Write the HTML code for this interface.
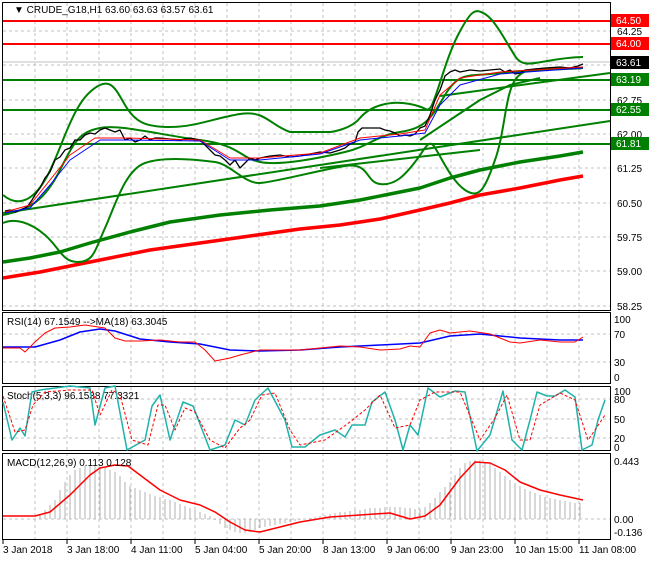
<!DOCTYPE html><html><head><style>
body{margin:0;background:#fff;width:650px;height:560px;overflow:hidden;font-family:"Liberation Sans",sans-serif}
</style></head><body>
<svg width="650" height="560" xmlns="http://www.w3.org/2000/svg" font-family="Liberation Sans, sans-serif" font-size="10" stroke-linejoin="round">
<rect width="650" height="560" fill="#fff"/>
<g stroke="#c0c0c0" stroke-dasharray="3,3" stroke-width="1">
<path d="M35 3V540M67 3V540M99 3V540M131 3V540M163 3V540M195 3V540M227 3V540M259 3V540M291 3V540M323 3V540M355 3V540M387 3V540M419 3V540M451 3V540M483 3V540M515 3V540M547 3V540M579 3V540"/>
<path d="M3 31H610M3 65H610M3 100H610M3 134H610M3 168H610M3 203H610M3 237H610M3 271H610M3 306H610"/>
<path d="M3 334H610M3 362H610M3 399H610M3 419H610M3 438H610M3 519H610"/>
</g>
<line x1="3" y1="62" x2="610" y2="62" stroke="#c0c0c0"/>
<g fill="none" stroke="#000" stroke-width="1">
<rect x="2.5" y="2.5" width="608" height="308"/>
<rect x="2.5" y="312.5" width="608" height="71"/>
<rect x="2.5" y="386.5" width="608" height="64"/>
<rect x="2.5" y="453.5" width="608" height="86"/>
</g>
<g stroke-width="2">
<line x1="3" y1="21" x2="610" y2="21" stroke="#f00"/>
<line x1="3" y1="44" x2="610" y2="44" stroke="#f00"/>
<line x1="3" y1="80" x2="610" y2="80" stroke="#008000"/>
<line x1="3" y1="110" x2="610" y2="110" stroke="#008000"/>
<line x1="3" y1="144" x2="610" y2="144" stroke="#008000"/>
</g>
<polyline fill="none" stroke="#008000" stroke-width="3.5" points="3,262 30,258 60,252 90,243 130,232 170,222 220,215 270,210 320,206 360,200 400,192 420,188 450,178 480,170 520,162 560,156 583,152"/>
<polyline fill="none" stroke="#f00" stroke-width="3.5" points="3,278 40,272 70,266 110,258 150,250 200,243 250,236 300,229 340,225 380,219 420,210 450,203 480,195 520,188 560,180 583,176"/>
<g stroke="#008000" stroke-width="2" fill="none">
<line x1="3" y1="213" x2="610" y2="121"/>
<line x1="440" y1="96" x2="610" y2="73"/>
<line x1="320" y1="168" x2="480" y2="150"/>
<polyline points="420,140 450,120 480,100 510,85 540,78"/>
</g>
<g stroke="#008000" stroke-width="2" fill="none">
<path d="M3,195 C15,205 30,205 45,180 S70,110 90,92 S115,88 125,105 S145,127 170,127 S215,118 240,114 S270,125 290,132 L330,132 S350,130 360,118 S390,100 410,104 S425,112 430,108 S445,60 458,35 S475,8 485,14 S505,40 515,56 S540,58 583,57"/>
<path d="M3,223 C15,218 30,222 45,235 S62,262 78,262 S95,250 105,228 S125,170 145,163 S200,160 215,162 S245,184 260,183 S320,170 345,166 S365,182 380,184 S405,175 415,162 S428,140 433,145 S450,180 465,190 S485,188 495,160 S505,95 515,80 S540,70 583,68"/>
<path d="M3,215 C30,210 45,200 60,170 S80,132 100,128 S160,135 200,140 S240,158 260,162 S320,158 345,152 S375,136 400,132 S430,120 445,95 S470,77 500,73 S560,70 583,68"/>
</g>
<polyline fill="none" stroke="#000" stroke-width="1.3" points="5,211 10,210 15,212 20,210 25,208 28,206 32,200 35,195 40,188 45,178 50,172 55,160 60,157 65,150 70,148 75,140 80,140 85,135 90,133 95,134 100,130 105,128 110,130 115,132 120,130 125,140 130,138 135,142 140,140 145,136 150,140 155,138 160,138 170,139 180,140 190,138 200,140 205,145 210,150 215,155 220,156 225,160 230,165 235,160 240,168 245,163 250,158 255,160 260,158 270,156 280,155 290,157 300,156 310,154 320,152 330,153 340,150 345,148 350,144 355,142 358,132 362,128 370,128 380,128 385,130 390,131 395,133 400,136 405,135 410,136 415,134 420,128 425,126 430,115 435,100 440,90 445,76 450,72 455,70 460,72 470,70 480,71 490,70 500,69 505,72 510,70 515,74 520,73 525,70 535,69 545,68 560,67 570,68 578,66 583,64"/>
<polyline fill="none" stroke="#f00" stroke-width="1" points="5,212 30,205 50,180 70,155 95,138 125,138 200,140 230,158 260,158 320,153 360,138 400,134 425,130 440,95 460,78 500,72 583,67"/>
<polyline fill="none" stroke="#00f" stroke-width="1" points="5,213 30,208 50,185 70,160 100,140 125,140 200,141 230,160 260,160 320,154 360,140 400,136 425,133 440,105 460,85 500,74 583,68"/>
<g fill="#000">
<text x="14" y="13" font-size="10">▼ CRUDE_G18,H1  63.60 63.63 63.57 63.61</text>
<text x="617" y="35">64.25</text>
<text x="617" y="104">62.75</text>
<text x="617" y="138">62.00</text>
<text x="617" y="172">61.25</text>
<text x="617" y="207">60.50</text>
<text x="617" y="241">59.75</text>
<text x="617" y="275">59.00</text>
<text x="617" y="310">58.25</text>
</g>
<rect x="611" y="14" width="38" height="13" fill="#f00"/><text x="616" y="24" fill="#fff">64.50</text>
<rect x="611" y="37" width="38" height="13" fill="#f00"/><text x="616" y="47" fill="#fff">64.00</text>
<rect x="611" y="56" width="38" height="13" fill="#000"/><text x="616" y="66" fill="#fff">63.61</text>
<rect x="611" y="73" width="38" height="13" fill="#008000"/><text x="616" y="83" fill="#fff">63.19</text>
<rect x="611" y="103" width="38" height="13" fill="#008000"/><text x="616" y="113" fill="#fff">62.55</text>
<rect x="611" y="137" width="38" height="13" fill="#008000"/><text x="616" y="147" fill="#fff">61.81</text>
<text x="7" y="325">RSI(14) 67.1549 -->MA(18) 63.3045</text>
<polyline fill="none" stroke="#00f" stroke-width="1.5" points="3,347 35,347 60,340 80,332 100,329 115,331 140,339 170,342 200,344 230,350 260,351 300,350 340,347 380,345 420,343 450,336 480,334 500,336 520,338 560,340 583,340"/>
<polyline fill="none" stroke="#f00" stroke-width="1" points="3,348 20,348 25,352 35,342 45,333 55,328 70,327 85,325 105,328 115,338 125,341 140,341 160,340 180,342 195,342 205,350 215,361 230,358 240,355 260,350 300,350 340,346 360,347 380,350 400,349 410,346 420,347 430,333 440,330 450,333 470,331 490,334 510,342 520,343 540,340 560,342 575,342 583,337"/>
<text x="614" y="323">100</text><text x="614" y="338">70</text><text x="614" y="366">30</text><text x="614" y="381">0</text>
<text x="7" y="399">Stoch(5,3,3) 96.1538 77.3321</text>
<polyline fill="none" stroke="#20b2aa" stroke-width="1.5" points="3,402 12,440 20,428 25,436 32,392 40,390 55,388 70,386 90,388 95,425 105,388 115,386 127,450 145,440 152,406 160,395 170,440 183,402 193,406 210,450 225,445 235,420 245,425 255,400 268,388 285,420 292,447 305,447 320,435 335,430 345,437 352,425 365,425 372,402 385,392 395,420 403,450 410,425 418,435 428,388 440,397 455,391 465,392 477,451 490,435 503,391 512,440 522,450 530,420 537,392 547,396 555,396 565,390 575,397 582,450 592,445 598,420 605,400"/>
<polyline fill="none" stroke="#f00" stroke-width="1" stroke-dasharray="3,2" points="3,396 15,432 25,430 33,405 45,392 70,390 92,390 100,415 112,390 120,395 132,440 148,445 158,405 165,405 175,430 185,408 195,412 210,440 225,448 240,428 250,420 262,395 275,393 290,430 300,445 325,440 350,422 365,410 380,395 395,428 410,425 420,400 435,392 460,392 480,440 495,418 507,395 520,440 530,440 540,405 560,393 575,400 588,440 595,430 605,415"/>
<text x="614" y="395">100</text><text x="614" y="403">80</text><text x="614" y="423">50</text><text x="614" y="442">20</text><text x="614" y="451">0</text>
<g stroke="#b0b0b0" stroke-width="1">
<path d="M40 519V515M45 519V510M50 519V505M55 519V500M60 519V490M65 519V482M70 519V475M75 519V470M80 519V468M85 519V466M90 519V465M95 519V465M100 519V467M105 519V468M110 519V470M115 519V472M120 519V476M125 519V482M130 519V486M135 519V488M140 519V490M145 519V492M150 519V494M155 519V496M160 519V497M165 519V499M170 519V500M175 519V502M180 519V504M185 519V506M190 519V508M195 519V510M200 519V512M205 519V514M210 519V516M215 519V520M220 519V524M225 519V528M230 519V530M235 519V532M240 519V533M245 519V533M250 519V532M255 519V530M260 519V528M265 519V527M270 519V526M275 519V525M280 519V524M285 519V523M290 519V522M295 519V521M300 519V520M305 519V519M310 519V518M315 519V517M320 519V516M325 519V515M330 519V514M335 519V513M340 519V512M345 519V512M350 519V511M355 519V510M360 519V510M365 519V509M370 519V508M375 519V508M380 519V508M385 519V507M390 519V507M395 519V507M400 519V507M405 519V508M410 519V508M415 519V509M420 519V509M425 519V507M430 519V503M435 519V498M440 519V492M445 519V487M450 519V482M455 519V475M460 519V468M465 519V463M470 519V461M475 519V460M480 519V460M485 519V462M490 519V464M495 519V468M500 519V472M505 519V476M510 519V480M515 519V483M520 519V486M525 519V489M530 519V491M535 519V493M540 519V495M545 519V497M550 519V498M555 519V499M560 519V500M565 519V501M570 519V502M575 519V503M580 519V503"/>
</g>
<polyline fill="none" stroke="#f00" stroke-width="1.5" points="3,516 35,516 50,512 70,495 90,475 100,468 115,465 128,466 140,475 160,490 180,500 200,505 215,512 230,522 245,530 260,532 280,527 300,522 330,517 360,515 390,513 410,519 425,516 440,505 460,478 475,462 490,463 505,470 520,482 540,490 560,495 583,500"/>
<text x="7" y="466">MACD(12,26,9) 0.113 0.128</text>
<text x="614" y="465">0.443</text><text x="614" y="523">0.00</text><text x="614" y="536">-0.136</text>
<g stroke="#000"><path d="M3 540V544M67 540V544M131 540V544M195 540V544M259 540V544M323 540V544M387 540V544M451 540V544M515 540V544M579 540V544"/></g>
<text x="3" y="553">3 Jan 2018</text>
<text x="67" y="553">3 Jan 18:00</text>
<text x="131" y="553">4 Jan 11:00</text>
<text x="195" y="553">5 Jan 04:00</text>
<text x="259" y="553">5 Jan 20:00</text>
<text x="323" y="553">8 Jan 13:00</text>
<text x="387" y="553">9 Jan 06:00</text>
<text x="451" y="553">9 Jan 23:00</text>
<text x="515" y="553">10 Jan 15:00</text>
<text x="579" y="553">11 Jan 08:00</text>
</svg>
</body></html>
